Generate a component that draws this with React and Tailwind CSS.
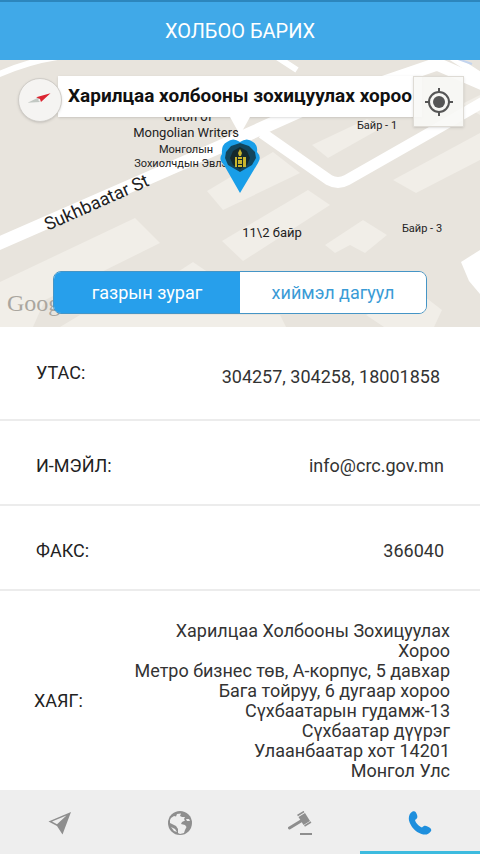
import { useState } from 'react';

const rows = [
  { label: 'УТАС:', value: '304257, 304258, 18001858', row: 'pt-[34px] pb-[26px] pl-9 pr-10', labelBox: 'pb-2' },
  { label: 'И-МЭЙЛ:', value: 'info@crc.gov.mn', href: 'mailto:info@crc.gov.mn', row: 'pt-[33px] pb-[26px] px-9', labelBox: '' },
  { label: 'ФАКС:', value: '366040', row: 'pt-[33px] pb-[26px] px-9', labelBox: '' },
];

const address = [
  'Харилцаа Холбооны Зохицуулах',
  'Хороо',
  'Метро бизнес төв, А-корпус, 5 давхар',
  'Бага тойруу, 6 дугаар хороо',
  'Сүхбаатарын гудамж-13',
  'Сүхбаатар дүүрэг',
  'Улаанбаатар хот 14201',
  'Монгол Улс',
];

function SendIcon() {
  return (
    <svg viewBox="0 0 24 24" className="size-6" fill="currentColor" fillRule="evenodd">
      <path d="M23 1 14.500 23.500 9 15 .5 10.500Z M18.500 4.500 4 10.500 9 13.200Z" />
    </svg>
  );
}

function GlobeIcon() {
  return (
    <svg viewBox="0 0 24 24" className="size-6">
      <circle cx="12" cy="12" r="12" fill="currentColor" />
      <path
        d="M3 7 6 5 8 5.500 9 3 13 2.500 12 5 14 6 17 6 16 8 17 9.500 14 11 13 13 17 14 18.500 16 17 19 16 22 12 23 10 22 10 18 8 15 6 14 4 13 2 12 2 9Z M3 16 7 18 9 21 6 20Z M18 8 21 8 22 10 19 10Z"
        fill="#eeeeee"
      />
    </svg>
  );
}

function GavelIcon() {
  return (
    <svg viewBox="0 0 24 24" className="size-6" stroke="currentColor" fill="none">
      <path d="M1.500 17 13 10" strokeWidth="3" strokeLinecap="round" />
      <path d="m10.500 6 6.500-4 5 8-6.500 4Z" fill="currentColor" stroke="none" />
      <path d="m9.500 4.500 6.500-4M16.500 15l6.500-4" strokeWidth="1.500" />
      <path d="M12 23H24" strokeWidth="2" />
    </svg>
  );
}

function PhoneIcon() {
  return (
    <svg viewBox="0 0 24 24" className="size-6" fill="currentColor">
      <path d="M4.500.5C7-.8 8.500 1.500 9.200 4.500 9.700 6.800 9 7.800 7 9c.8 3.200 4 6.500 7 7.500 1.800-2 3.500-2 5.500-1 2.800 1.200 4.800 2.800 3.200 5-2 3-5.200 3.800-9.200 2.500C7.500 21 2.500 15.500 1 9.500.3 5.500 1.500 2 4.500.5Z" />
    </svg>
  );
}

const tabs = [
  { name: 'Илгээх', Icon: SendIcon },
  { name: 'Вэб', Icon: GlobeIcon },
  { name: 'Хууль', Icon: GavelIcon },
  { name: 'Холбоо барих', Icon: PhoneIcon },
];

function MapCanvas() {
  return (
    <svg viewBox="0 0 480 267" preserveAspectRatio="xMidYMid slice" className="block w-full h-[267px] bg-[#e8e4dd]">
      {/* buildings */}
      <g fill="#f1eee8">
        <path d="M0 222 135 158l25 25-115 57-12 27H0Z" />
        <path d="m207 131 66-39 27 21-77 37Z" />
        <path d="m222 181 86-51 22 15-87 56Z" />
        <path d="m325 185 38-25 24 15-22 18-15-8-15 8Z" />
        <path d="m312 85 55-26 16 8-55 31Z" />
        <path d="m393 120 87-47v27l-64 33Z" />
        <path d="m462 44 18-9v20Z" />
        <path d="m170 217 23-15 22 15Z" />
        <path d="m60 267 20-12h200l6 12Z" />
        <path d="m366 255 54-22 22 17-8 17h-50Z" />
      </g>
      {/* roads */}
      <g fill="none" stroke="#fff" strokeLinejoin="round">
        <path d="M-5 185 240 78 300 51 437 4 490 27" strokeWidth="13" />
        <path d="m262 73 67 47q9 5 18 0L440 67l45-26" strokeWidth="11" />
        <path d="M-5 16Q30 0 65-4M277-3l20 13" strokeWidth="6" />
        <path d="m450-4 34 22" strokeWidth="7" />
      </g>
      <path d="M480 190 461 202l8 19 11 13Z" fill="#fff" />
      <path d="m458-1 14 5" stroke="#c3d4ee" strokeWidth="2" />
      <g className="font-['Roboto',sans-serif]" fill="#222" textAnchor="middle">
        <text x="188" y="61" fontSize="13">Union of</text>
        <text x="186" y="77" fontSize="13">Mongolian Writers</text>
        <text x="186" y="93" fontSize="11">Монголын</text>
        <text x="184" y="107" fontSize="11">Зохиолчдын Эвлэл</text>
        <text x="377" y="69" fontSize="11">Байр - 1</text>
        <text x="422" y="172" fontSize="11">Байр - 3</text>
        <text x="272" y="177" fontSize="13">11\2 байр</text>
        <text x="99" y="148" fontSize="18" transform="rotate(-24 99 148)">Sukhbaatar St</text>
      </g>
      <text x="7" y="251" fontSize="24" fill="#aaa69f" className="font-['Liberation_Serif',serif]">Google</text>
      {/* pin */}
      <path d="M240 133 224 105Q218 99 222 94 221 85 227 82 233 77 240 82 247 77 253 82 258 85 257 92 262 97 258 103Z" fill="#199ee8" />
      <path d="m240 83 9 3 6 6 1 6-4 7-12 7-12-7-3-7 1-6 5-6Z" fill="#12455c" />
      <path d="m240 87 7 4 3 7-3 7-7 4-7-4-3-7 3-7Z" fill="#14292c" />
      <path d="M235 97h2v10h-2zM243 97h3v10h-3zM238 97h4v2h-4zM238 100h4v4h-4zM238 105h4v2h-4zM240 89l2 4-1 3h-2l-1-3Z" fill="#c9b52d" />
    </svg>
  );
}

function MapPanel() {
  const [mode, setMode] = useState('map');
  const on = 'bg-[#279feb] text-white';
  const off = 'bg-white text-[#3a9bd6]';
  return (
    <section className="relative overflow-hidden">
      <MapCanvas />
      <div className="absolute inset-x-[58px] top-4 h-[41px] bg-white shadow flex items-center pl-[10px] text-[19px] font-bold text-[#111] whitespace-nowrap">
        Харилцаа холбооны зохицуулах хороо
        <svg viewBox="0 0 20 18" className="absolute top-full left-1/2 -translate-x-1/2 w-5 h-[18px]">
          <path d="M0 0h20L10 18Z" fill="#fff" />
        </svg>
      </div>
      <button aria-label="Луужин" className="absolute left-[18px] top-[18px] size-11 rounded-full bg-[#f5f4f2] border border-[#d0cdc8] shadow">
        <svg viewBox="0 0 44 44" className="size-full">
          <path d="m9 25 14-7-3 4 2 2Z" fill="#c2c8c3" />
          <path d="m18 19 15-4-10 9-1-3Z" fill="#dc2430" />
        </svg>
      </button>
      <button aria-label="Миний байршил" className="absolute right-4 top-4 size-[51px] bg-[#f8f8f6]/90 border border-[#dedbd5] shadow-sm text-[#555] flex items-center justify-center">
        <svg viewBox="0 0 30 30" className="size-[30px]" fill="none" stroke="currentColor" strokeWidth="2">
          <circle cx="15" cy="15" r="10" />
          <circle cx="15" cy="15" r="6" fill="currentColor" stroke="none" />
          <path d="M15 1v5M15 24v5M1 15h5M24 15h5" />
        </svg>
      </button>
      <div className="absolute inset-x-[53px] bottom-[13px] h-[43px] flex rounded-lg border border-[#4595c6] overflow-hidden text-[18px]">
        <button onClick={() => setMode('map')} className={`flex-1 ${mode === 'map' ? on : off}`}>
          газрын зураг
        </button>
        <button onClick={() => setMode('satellite')} className={`flex-1 ${mode === 'satellite' ? on : off}`}>
          хиймэл дагуул
        </button>
      </div>
    </section>
  );
}

export default function App() {
  const [active, setActive] = useState(3);
  return (
    <div className="min-h-screen flex flex-col bg-white font-['Roboto',sans-serif] text-[#333]">
      <header className="h-[60px] bg-[#40a9e8] border-t-2 border-[#2c86bd] flex items-center justify-center">
        <h1 className="text-[20px] text-white">ХОЛБОО БАРИХ</h1>
      </header>
      <MapPanel />
      <dl className="flex-1 text-[18px] leading-6">
        {rows.map(({ label, value, href, row, labelBox }) => (
          <div key={label} className={`flex items-center justify-between border-b-2 border-[#ececec] ${row}`}>
            <dt className={`text-[#222] ${labelBox}`}>{label}</dt>
            <dd>{href ? <a href={href}>{value}</a> : value}</dd>
          </div>
        ))}
        <div className="flex items-center justify-between pt-[30px] pb-[9px] pl-[34px] pr-[30px]">
          <dt className="text-[#222]">ХАЯГ:</dt>
          <dd className="text-right leading-5">
            {address.map((line) => (
              <p key={line}>{line}</p>
            ))}
          </dd>
        </div>
      </dl>
      <nav className="grid grid-cols-4 h-16 bg-[#eeeeee]">
        {tabs.map(({ name, Icon }, i) => (
          <button
            key={name}
            aria-label={name}
            onClick={() => setActive(i)}
            className={`flex items-center justify-center pt-1 border-b-3 ${
              i === active ? 'border-[#3dbbdf] text-[#1e8fdd]' : 'border-transparent text-[#8e8e8e]'
            }`}
          >
            <Icon />
          </button>
        ))}
      </nav>
    </div>
  );
}
